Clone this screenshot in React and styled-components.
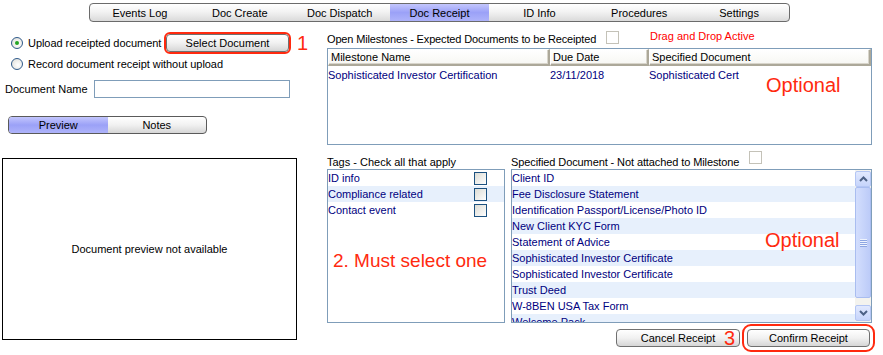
import React from "react";
import styled, { createGlobalStyle } from "styled-components";

const GlobalStyle = createGlobalStyle`
  body {
    margin: 0;
    background: #fff;
    font-family: "Liberation Sans", Arial, sans-serif;
    font-size: 11px;
    color: #000;
  }
`;

const tabs = ["Events Log", "Doc Create", "Doc Dispatch", "Doc Receipt", "ID Info", "Procedures", "Settings"];

const documents = [
  "Client ID",
  "Fee Disclosure Statement",
  "Identification Passport/License/Photo ID",
  "New Client KYC Form",
  "Statement of Advice",
  "Sophisticated Investor Certificate",
  "Sophisticated Investor Certificate",
  "Trust Deed",
  "W-8BEN USA Tax Form",
  "Welcome Pack",
];

const tags = ["ID info", "Compliance related", "Contact event"];

const App = () => {
  return (
    <Page>
      <GlobalStyle />
      <TabBar>
        {tabs.map((t) => (
          <Tab key={t} $active={t === "Doc Receipt"}>
            {t}
          </Tab>
        ))}
      </TabBar>

      <Main>
        <LeftColumn>
          <RadioRow style={{ height: 19 }}>
            <Radio $checked />
            <RadioLabel $width={138}>Upload receipted document</RadioLabel>
            <Button $width={123} $marked>
              Select Document
            </Button>
            <Annotation style={{ marginLeft: 8 }}>1</Annotation>
          </RadioRow>
          <RadioRow style={{ marginTop: 4 }}>
            <Radio />
            <RadioLabel>Record document receipt without upload</RadioLabel>
          </RadioRow>
          <NameRow>
            <NameLabel>Document Name</NameLabel>
            <NameInput />
          </NameRow>
          <Toggle>
            <ToggleHalf $active>Preview</ToggleHalf>
            <ToggleHalf>Notes</ToggleHalf>
          </Toggle>
          <PreviewBox>Document preview not available</PreviewBox>
        </LeftColumn>

        <RightColumn>
          <HeaderLine>
            <MilestoneLabel>Open Milestones - Expected Documents to be Receipted</MilestoneLabel>
            <PlainCheck />
            <DragText>Drag and Drop Active</DragText>
          </HeaderLine>

          <Table>
            <HeadRow>
              <HeadCell $width={222}>Milestone Name</HeadCell>
              <HeadCell $width={99}>Due Date</HeadCell>
              <HeadCell $grow>Specified Document</HeadCell>
            </HeadRow>
            <DataRow>
              <DataCell $width={222}>Sophisticated Investor Certification</DataCell>
              <DataCell $width={99}>23/11/2018</DataCell>
              <DataCell $grow>Sophisticated Cert</DataCell>
            </DataRow>
            <BigNote style={{ left: 438, top: 26 }}>Optional</BigNote>
          </Table>

          <LowerHeader>
            <TagsLabel>Tags - Check all that apply</TagsLabel>
            <SpecLabel>Specified Document - Not attached to Milestone</SpecLabel>
            <PlainCheck style={{ marginTop: -3 }} />
          </LowerHeader>

          <LowerRow>
            <TagsBox>
              {tags.map((t, i) => (
                <ListRow key={t} $alt={i % 2 === 1}>
                  <span>{t}</span>
                  <TagCheck />
                </ListRow>
              ))}
              <BigNote style={{ left: 5, top: 81, fontSize: 19 }}>2. Must select one</BigNote>
            </TagsBox>

            <DocBox>
              <DocList>
                {documents.map((d, i) => (
                  <ListRow key={i} $alt={i % 2 === 1}>
                    {d}
                  </ListRow>
                ))}
              </DocList>
              <Scrollbar>
                <ScrollButton>
                  <svg width="9" height="6" viewBox="0 0 9 6">
                    <polyline points="1,5 4.5,1.5 8,5" fill="none" stroke="#4d6185" strokeWidth="2" />
                  </svg>
                </ScrollButton>
                <Thumb>
                  <Grip>
                    <i />
                    <i />
                    <i />
                    <i />
                  </Grip>
                </Thumb>
                <Track />
                <ScrollButton>
                  <svg width="9" height="6" viewBox="0 0 9 6">
                    <polyline points="1,1 4.5,4.5 8,1" fill="none" stroke="#4d6185" strokeWidth="2" />
                  </svg>
                </ScrollButton>
              </Scrollbar>
              <BigNote style={{ left: 253, top: 60 }}>Optional</BigNote>
            </DocBox>
          </LowerRow>

          <ButtonRow>
            <Button $width={124}>Cancel Receipt</Button>
            <Annotation style={{ position: "absolute", left: 397, top: -1 }}>3</Annotation>
            <Button $width={123} $marked $wide style={{ marginLeft: 7 }}>
              Confirm Receipt
            </Button>
          </ButtonRow>
        </RightColumn>
      </Main>
    </Page>
  );
};

export default App;

const Page = styled.div`
  width: 883px;
  height: 355px;
  overflow: hidden;
`;

const TabBar = styled.div`
  box-sizing: border-box;
  margin: 3px 0 0 89px;
  width: 701px;
  height: 19px;
  display: flex;
  border: 1px solid #6b6b6b;
  border-radius: 4px;
  overflow: hidden;
  background: linear-gradient(#ffffff, #f3f3f3 45%, #dadada);
`;

const Tab = styled.div`
  flex: 1;
  display: flex;
  align-items: center;
  justify-content: center;
  background: ${(p) =>
    p.$active ? "linear-gradient(#c3c6fd, #9ba1f7 50%, #aeb3fa)" : "transparent"};
`;

const Main = styled.div`
  display: flex;
`;

const LeftColumn = styled.div`
  width: 300px;
  flex-shrink: 0;
  display: flex;
  flex-direction: column;
  padding-top: 11px;
`;

const RadioRow = styled.div`
  display: flex;
  align-items: center;
  height: 16px;
  padding-left: 11px;
  white-space: nowrap;
  & > * {
    flex-shrink: 0;
  }
`;

const RadioLabel = styled.span`
  width: ${(p) => (p.$width ? `${p.$width}px` : "auto")};
  letter-spacing: -0.05px;
`;

const Radio = styled.span`
  box-sizing: border-box;
  width: 12px;
  height: 12px;
  margin-right: 5px;
  border-radius: 50%;
  border: 1px solid #2f5a8a;
  background: radial-gradient(circle at 60% 60%, #ffffff, #dcdcd6);
  display: flex;
  align-items: center;
  justify-content: center;
  &::after {
    content: "";
    width: 4px;
    height: 4px;
    border-radius: 50%;
    background: ${(p) => (p.$checked ? "#24a524" : "transparent")};
  }
`;

const Button = styled.div`
  box-sizing: border-box;
  flex-shrink: 0;
  width: ${(p) => p.$width}px;
  height: 18px;
  display: flex;
  align-items: center;
  justify-content: center;
  border: 1px solid #707070;
  border-radius: 4px;
  background: linear-gradient(#ffffff, #f1f1f1 50%, #d6d6d6);
  outline: ${(p) => (p.$marked ? "2px solid #ff2a0f" : "none")};
  outline-offset: ${(p) => (p.$wide ? "3px" : "0")};
`;

const Annotation = styled.span`
  color: #ff2a0f;
  font-size: 20px;
  line-height: 20px;
`;

const NameRow = styled.div`
  display: flex;
  align-items: center;
  margin-top: 8px;
  height: 18px;
`;

const NameLabel = styled.span`
  width: 94px;
  padding-left: 5px;
  box-sizing: border-box;
  flex-shrink: 0;
`;

const NameInput = styled.div`
  box-sizing: border-box;
  width: 196px;
  height: 18px;
  border: 1px solid #7f9db9;
  background: #fff;
`;

const Toggle = styled.div`
  box-sizing: border-box;
  margin: 18px 0 0 8px;
  width: 199px;
  height: 18px;
  display: flex;
  border: 1px solid #5a5a5a;
  border-radius: 4px;
  overflow: hidden;
  background: linear-gradient(#ffffff, #f1f1f1 50%, #d6d6d6);
`;

const ToggleHalf = styled.div`
  flex: 1;
  display: flex;
  align-items: center;
  justify-content: center;
  background: ${(p) =>
    p.$active ? "linear-gradient(#c3c6fd, #9ba1f7 50%, #aeb3fa)" : "transparent"};
`;

const PreviewBox = styled.div`
  box-sizing: border-box;
  margin: 24px 0 0 2px;
  width: 295px;
  height: 182px;
  border: 1px solid #000;
  display: flex;
  align-items: center;
  justify-content: center;
`;

const RightColumn = styled.div`
  margin-left: 27px;
  width: 545px;
  display: flex;
  flex-direction: column;
  padding-top: 9px;
`;

const HeaderLine = styled.div`
  display: flex;
  align-items: center;
  height: 16px;
  white-space: nowrap;
  & > * {
    flex-shrink: 0;
  }
`;

const MilestoneLabel = styled.span`
  width: 279px;
  letter-spacing: -0.15px;
`;

const PlainCheck = styled.span`
  box-sizing: border-box;
  flex-shrink: 0;
  width: 13px;
  height: 13px;
  border: 1px solid #c4c2b8;
  background: #fff;
  align-self: flex-start;
`;

const DragText = styled.span`
  color: #ff0000;
  margin-left: 31px;
  align-self: flex-start;
  margin-top: -1px;
`;

const Table = styled.div`
  position: relative;
  box-sizing: border-box;
  margin-top: 1px;
  height: 97px;
  border: 1px solid #7f9db9;
  background: #fff;
`;

const HeadRow = styled.div`
  display: flex;
  height: 17px;
`;

const HeadCell = styled.div`
  box-sizing: border-box;
  width: ${(p) => (p.$grow ? "auto" : `${p.$width}px`)};
  flex: ${(p) => (p.$grow ? 1 : "none")};
  padding-left: 2px;
  display: flex;
  align-items: center;
  border-top: 1px solid #fff;
  border-left: 1px solid #fff;
  border-right: 2px solid #aca899;
  border-bottom: 2px solid #aca899;
  background: linear-gradient(#ffffff, #f7f7f3);
  box-shadow: inset -1px -1px 0 #d8d5cb;
`;

const DataRow = styled.div`
  display: flex;
  height: 18px;
  align-items: center;
  color: #000080;
`;

const DataCell = styled.div`
  width: ${(p) => (p.$grow ? "auto" : `${p.$width}px`)};
  flex: ${(p) => (p.$grow ? 1 : "none")};
  white-space: nowrap;
`;

const BigNote = styled.span`
  position: absolute;
  color: #ff2a0f;
  font-size: 20px;
  line-height: 20px;
  white-space: nowrap;
`;

const LowerHeader = styled.div`
  display: flex;
  align-items: center;
  margin-top: 9px;
  height: 15px;
  white-space: nowrap;
  & > * {
    flex-shrink: 0;
  }
`;

const TagsLabel = styled.span`
  width: 184px;
`;

const SpecLabel = styled.span`
  width: 238px;
  letter-spacing: -0.1px;
`;

const LowerRow = styled.div`
  display: flex;
  gap: 6px;
  height: 154px;
`;

const TagsBox = styled.div`
  position: relative;
  box-sizing: border-box;
  width: 178px;
  border: 1px solid #7f9db9;
  background: #fff;
`;

const ListRow = styled.div`
  height: 16px;
  display: flex;
  align-items: center;
  justify-content: space-between;
  color: #000080;
  white-space: nowrap;
  background: ${(p) => (p.$alt ? "#e7f0fc" : "#fff")};
`;

const TagCheck = styled.span`
  box-sizing: border-box;
  width: 13px;
  height: 13px;
  margin-right: 17px;
  border: 1px solid #1c5180;
  background: linear-gradient(135deg, #dcdcd5, #f4f4f2 70%, #ffffff);
`;

const DocBox = styled.div`
  position: relative;
  box-sizing: border-box;
  flex: 1;
  display: flex;
  border: 1px solid #7f9db9;
  background: #fff;
  overflow: hidden;
`;

const DocList = styled.div`
  flex: 1;
  overflow: hidden;
`;

const Scrollbar = styled.div`
  width: 16px;
  padding: 1px 0 1px 0;
  display: flex;
  flex-direction: column;
  background: #f4f3ee;
`;

const ScrollButton = styled.div`
  box-sizing: border-box;
  height: 16px;
  display: flex;
  align-items: center;
  justify-content: center;
  border: 1px solid #b4c6f4;
  border-radius: 2px;
  background: linear-gradient(#e2e9fe, #c6d4fb);
`;

const Thumb = styled.div`
  box-sizing: border-box;
  height: 111px;
  display: flex;
  align-items: center;
  justify-content: center;
  border: 1px solid #a9bdf0;
  border-radius: 2px;
  background: linear-gradient(to right, #d3defd, #bccbf8);
`;

const Grip = styled.div`
  display: flex;
  flex-direction: column;
  gap: 1px;
  i {
    display: block;
    width: 7px;
    height: 1px;
    background: #eef3fe;
    box-shadow: 0 1px 0 #8ea6e2;
  }
`;

const Track = styled.div`
  flex: 1;
`;

const ButtonRow = styled.div`
  position: relative;
  display: flex;
  justify-content: flex-end;
  margin-top: 6px;
  padding-right: 2px;
`;
